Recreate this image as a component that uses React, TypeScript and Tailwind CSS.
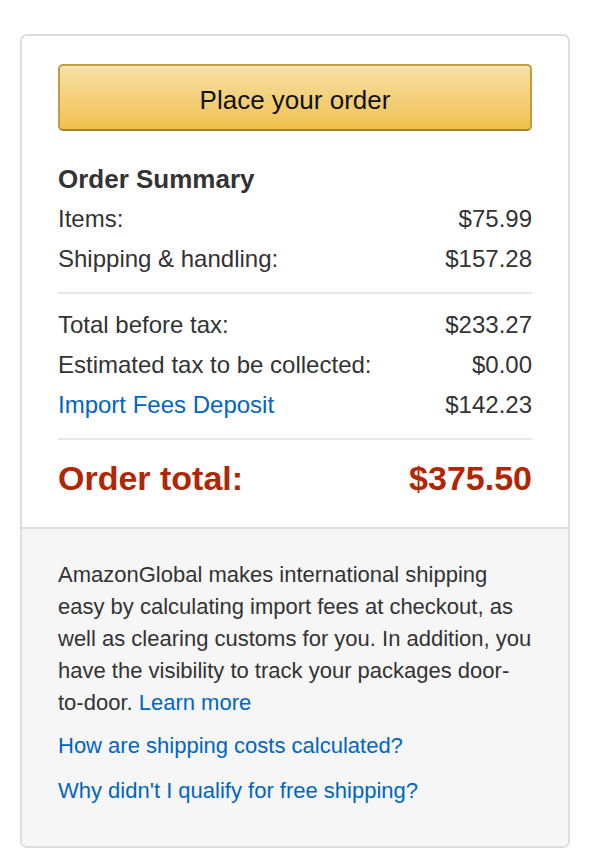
// Checkout sidebar: place-order button, order summary and the AmazonGlobal note.
const rows1 = [
  { label: 'Items:', value: '$75.99' },
  { label: 'Shipping & handling:', value: '$157.28' },
]

const rows2 = [
  { label: 'Total before tax:', value: '$233.27' },
  { label: 'Estimated tax to be collected:', value: '$0.00' },
]

function Row({ label, value, link }: { label: string; value: string; link?: boolean }) {
  return (
    <div className="flex items-center justify-between leading-[40px] text-[24px]">
      <span className={link ? 'text-[#0066c0]' : 'text-[#333]'}>{label}</span>
      <span className="text-[#333]">{value}</span>
    </div>
  )
}

export default function App() {
  return (
    <div className="min-h-screen bg-white pt-[34px] pl-[20px] font-['Liberation_Sans',Arial,sans-serif]">
      <div className="w-[550px] overflow-hidden rounded-[7px] border-2 border-[#dddddd] bg-white">
        <div className="px-[36px] pt-[28px] pb-[29px]">
          <button
            type="button"
            className="flex h-[67px] w-full items-center justify-center rounded-[5px] border-2 border-[#c29d3e] border-b-[#a6822d] bg-gradient-to-b from-[#f7dfa5] to-[#f0c14b] pt-[6px] text-[26px] text-[#111] shadow-[inset_0_2px_0_rgba(255,255,255,0.4)]"
          >
            Place your order
          </button>

          <h3 className="mt-[32px] text-[26px] font-bold leading-[32px] text-[#333]">
            Order Summary
          </h3>
          <div className="mt-[4px]">
            {rows1.map((r) => (
              <Row key={r.label} {...r} />
            ))}
          </div>
          <div className="mt-[13px] h-[2px] bg-[#e7e7e7]" />
          <div className="mt-[11px]">
            {rows2.map((r) => (
              <Row key={r.label} {...r} />
            ))}
            <Row label="Import Fees Deposit" value="$142.23" link />
          </div>
          <div className="mt-[13px] h-[2px] bg-[#e7e7e7]" />
          <div className="mt-[18px] flex items-center justify-between text-[34px] font-bold leading-[40px] text-[#b12704]">
            <span>Order total:</span>
            <span>$375.50</span>
          </div>
        </div>

        <div className="border-t-2 border-[#dddddd] bg-[#f6f6f6] px-[36px] pt-[30px] pb-[39px] text-[22px] leading-[32px]">
          <p className="text-[#333]">
            AmazonGlobal makes international shipping easy by calculating import fees at
            checkout, as well as clearing customs for you. In addition, you have the
            visibility to track your packages door-to-door.{' '}
            <a href="#" className="text-[#0066c0]">Learn more</a>
          </p>
          <a href="#" className="mt-[11px] block text-[#0066c0]">
            How are shipping costs calculated?
          </a>
          <a href="#" className="mt-[13px] block text-[#0066c0]">
            Why didn't I qualify for free shipping?
          </a>
        </div>
      </div>
    </div>
  )
}
